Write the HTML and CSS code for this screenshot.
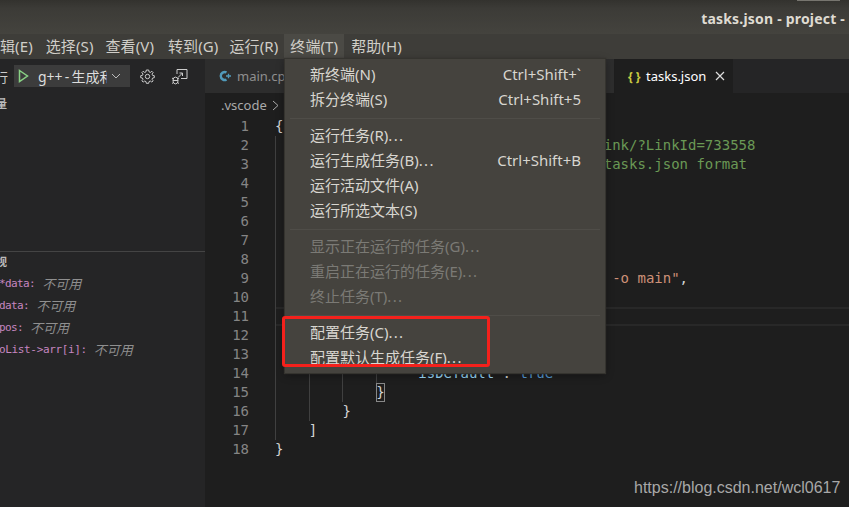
FILE: index.html
```html
<!DOCTYPE html>
<html lang="zh">
<head>
<meta charset="utf-8">
<title>tasks.json - project</title>
<link rel="stylesheet" href="styles.css">
</head>
<body>
<div class="window">
  <header class="titlebar"><span class="title">tasks.json - project -</span></header>
  <nav class="menubar">
    <span class="mi first">辑(E)</span>
    <span class="mi">选择(S)</span>
    <span class="mi">查看(V)</span>
    <span class="mi">转到(G)</span>
    <span class="mi">运行(R)</span>
    <span class="mi active">终端(T)</span>
    <span class="mi">帮助(H)</span>
  </nav>
  <div class="workbench">
    <aside class="sidebar">
      <div class="runbar">
        <span class="runlabel">行</span>
        <div class="runbox">
          <svg class="play" width="12" height="14" viewBox="0 0 12 14"><path d="M1.5 1.5 L9.5 7 L1.5 12.5 Z" fill="none" stroke="#89d185" stroke-width="1.5"/></svg>
          <span class="runname">g++ - 生成和</span>
          <svg class="chev" width="10" height="6" viewBox="0 0 10 6"><path d="M1 1 L5 5 L9 1" fill="none" stroke="#bbb" stroke-width="1"/></svg>
        </div>
        <svg class="gear" width="15" height="15" viewBox="0 0 15 15"><circle cx="7.5" cy="7.5" r="2.2" fill="none" stroke="#ccc"/><path d="M6.3 1 H8.7 L9 2.8 L10.4 3.4 L11.9 2.3 L13.1 3.5 L12 5.1 L12.6 6.4 L14.3 6.7 V8.7 L12.6 9 L12 10.3 L13.1 11.8 L11.8 13.1 L10.3 12 L9 12.6 L8.7 14.3 H6.3 L6 12.6 L4.7 12 L3.2 13.1 L1.9 11.8 L3 10.3 L2.4 9 L0.7 8.7 V6.7 L2.4 6.4 L3 5.1 L1.9 3.5 L3.1 2.3 L4.6 3.4 L6 2.8 Z" fill="none" stroke="#ccc"/></svg>
        <svg class="dbg" width="17" height="17" viewBox="0 0 17 17"><path d="M6 6 V1.5 H16 V10.5 H10 M7 9.5 L11.5 5 M8.5 5 H11.5 V8" fill="none" stroke="#ccc"/><ellipse cx="4.5" cy="12.5" rx="2.6" ry="3.4" fill="none" stroke="#ccc"/><path d="M1 10 L2.5 11 M8 10 L6.5 11 M1 15.5 L2.5 14.5 M8 15.5 L6.5 14.5 M2 12.5 H7" fill="none" stroke="#ccc"/></svg>
      </div>
      <div class="sec-head">量</div>
      <div class="watch">
        <div class="sec-head watch-head">视</div>
        <div class="w"><span class="wn">*data:</span><i>不可用</i></div>
        <div class="w"><span class="wn">data:</span><i>不可用</i></div>
        <div class="w"><span class="wn">pos:</span><i>不可用</i></div>
        <div class="w"><span class="wn long">oList-&gt;arr[i]:</span><i>不可用</i></div>
      </div>
    </aside>
    <main class="editor">
      <div class="tabs">
        <div class="tab inactive">
          <svg width="13" height="12" viewBox="0 0 13 12"><path d="M7.5 2.4 A4 4 0 1 0 7.5 9.6" fill="none" stroke="#519aba" stroke-width="2.4"/><path d="M7 6 H12 M9.5 3.8 V8.2" fill="none" stroke="#519aba" stroke-width="1.3"/></svg>
          <span>main.cpp</span>
        </div>
        <div class="tab current">
          <span class="jsonic">{ }</span>
          <span>tasks.json</span>
          <svg class="close" width="10" height="10" viewBox="0 0 10 10"><path d="M1 1 L9 9 M9 1 L1 9" stroke="#ddd" stroke-width="1.2"/></svg>
        </div>
      </div>
      <div class="crumbs"><span>.vscode</span><svg width="7" height="11" viewBox="0 0 7 11"><path d="M1 1 L6 5.5 L1 10" fill="none" stroke="#aaa"/></svg></div>
      <div class="code">
        <div class="ln"><b>1</b><code><span class="p">{</span></code></div>
        <div class="ln"><b>2</b><code><s></s><span class="c">// See https://go.microsoft.com/fwlink/?LinkId=733558</span></code></div>
        <div class="ln"><b>3</b><code><s></s><span class="c">// for the documentation about the tasks.json format</span></code></div>
        <div class="ln"><b>4</b><code><s></s><span class="k">"version"</span><span class="p">: </span><span class="v">"2.0.0"</span><span class="p">,</span></code></div>
        <div class="ln"><b>5</b><code><s></s><span class="k">"tasks"</span><span class="p">: [</span></code></div>
        <div class="ln"><b>6</b><code><s></s><s></s><span class="p">{</span></code></div>
        <div class="ln"><b>7</b><code><s></s><s></s><s></s><span class="k">"type"</span><span class="p">: </span><span class="v">"shell"</span><span class="p">,</span></code></div>
        <div class="ln"><b>8</b><code><s></s><s></s><s></s><span class="k">"label"</span><span class="p">: </span><span class="v">"build"</span><span class="p">,</span></code></div>
        <div class="ln"><b>9</b><code><s></s><s></s><s></s><span class="k">"command"</span><span class="p">: </span><span class="v">"g++ -g main.cpp -o main"</span><span class="p">,</span></code></div>
        <div class="ln"><b>10</b><code><s></s><s></s><s></s><span class="k">"problemMatcher"</span><span class="p">: [],</span></code></div>
        <div class="ln cur"><b>11</b><code><s></s><s></s><s></s></code></div>
        <div class="ln"><b>12</b><code><s></s><s></s><s></s><span class="k">"group"</span><span class="p">: {</span></code></div>
        <div class="ln"><b>13</b><code><s></s><s></s><s></s><s></s><span class="k">"kind"</span><span class="p">: </span><span class="v">"build"</span><span class="p">,</span></code></div>
        <div class="ln"><b>14</b><code><s></s><s></s><s></s><s></s><span class="k">"isDefault"</span><span class="p">: </span><span class="t">true</span></code></div>
        <div class="ln"><b>15</b><code><s></s><s></s><s></s><span class="p match">}</span></code></div>
        <div class="ln"><b>16</b><code><s></s><s></s><span class="p">}</span></code></div>
        <div class="ln"><b>17</b><code><s></s><span class="p">]</span></code></div>
        <div class="ln"><b>18</b><code><span class="p">}</span></code></div>
      </div>
    </main>
  </div>

  <div class="menu">
    <div class="row"><span>新终端(N)</span><kbd>Ctrl+Shift+`</kbd></div>
    <div class="row"><span>拆分终端(S)</span><kbd>Ctrl+Shift+5</kbd></div>
    <hr>
    <div class="row"><span>运行任务(R)<span class="dots">...</span></span></div>
    <div class="row"><span>运行生成任务(B)<span class="dots">...</span></span><kbd>Ctrl+Shift+B</kbd></div>
    <div class="row"><span>运行活动文件(A)</span></div>
    <div class="row"><span>运行所选文本(S)</span></div>
    <hr>
    <div class="row off"><span>显示正在运行的任务(G)<span class="dots">...</span></span></div>
    <div class="row off"><span>重启正在运行的任务(E)<span class="dots">...</span></span></div>
    <div class="row off"><span>终止任务(T)<span class="dots">...</span></span></div>
    <hr>
    <div class="row"><span>配置任务(C)<span class="dots">...</span></span></div>
    <div class="row"><span>配置默认生成任务(F)<span class="dots">...</span></span></div>
  </div>
  <div class="redbox"></div>
  <div class="mark">https://blog.csdn.net/wcl0617</div>
</div>
</body>
</html>
```

FILE: styles.css
```css
* { box-sizing: border-box; }
html, body { margin: 0; height: 100%; background: #1e1e1e; overflow: hidden; }
.window {
  position: relative; width: 849px; height: 507px; overflow: hidden;
  display: flex; flex-direction: column;
  font-family: "Noto Sans", "Noto Sans CJK SC", sans-serif;
  color: #ccc;
}
.titlebar {
  position: relative; height: 34px; flex: none;
  background: linear-gradient(#33322e, #3c3b37 25%, #44433e);
  display: flex; justify-content: flex-end; align-items: center; padding: 3px 4px 0 0;
}
.titlebar::before {
  content: ""; position: absolute; top: 0; right: 9px; width: 43px; height: 1px; background: #77756f;
}
.title { font: bold 14px "Noto Sans", sans-serif; color: #dfdbd2; letter-spacing: .2px; }
.menubar {
  height: 25px; flex: none; background: #3e3d39;
  display: flex; align-items: flex-start; font-size: 15px; color: #d0cec8; letter-spacing: .1px;
}
.mi { height: 24px; line-height: 24px; padding: 0 6px; }
.mi.first { margin-left: -6px; }
.mi:nth-child(2) { margin-left: 1px; }
.mi:nth-child(4) { margin-left: 2px; }
.mi:nth-child(5) { margin-left: -1px; }
.mi:nth-child(7) { margin-left: 1px; }
.mi.active { background: #4b4a45; }
.workbench { flex: 1; display: flex; min-height: 0; }
.sidebar { width: 205px; flex: none; background: #252526; display: flex; flex-direction: column; }
.runbar { height: 34px; display: flex; align-items: center; font-size: 13px; }
.runlabel { width: 14px; margin-left: -5px; font-size: 13px; flex: none; margin-right: 5px; }
.runbox {
  width: 116px; height: 22px; background: #3c3c3c; flex: none;
  display: flex; align-items: center; padding-left: 4px; overflow: hidden;
}
.play { flex: none; margin-right: 8px; }
.runname { width: 69px; overflow: hidden; white-space: nowrap; font-size: 14px; color: #ddd; flex: none; word-spacing: -1.5px; }
.chev { flex: none; margin-left: 4px; }
.gear { margin-left: 10px; flex: none; }
.dbg { margin-left: 16px; flex: none; }
.sec-head { font-size: 11px; font-weight: 700; line-height: 22px; height: 22px; margin-left: -4px; color: #bbb; }
.watch { margin-top: 136px; border-top: 1px solid #444; }
.watch-head { height: 21px; line-height: 19px; }
.w { height: 22px; display: flex; gap: 7px; align-items: center; padding-bottom: 1px; white-space: nowrap; margin-left: -1px; }
.wn { color: #c586c0; font: 11px "DejaVu Sans Mono", monospace; letter-spacing: -.6px; }
.wn.long { letter-spacing: -.35px; }
.w i { color: #8f8f8f; font: italic 13px "Noto Sans CJK SC", sans-serif; }
.editor { flex: 1; min-width: 0; background: #1e1e1e; display: flex; flex-direction: column; }
.tabs { height: 34px; flex: none; background: #252526; display: flex; font-size: 13px; }
.tab { display: flex; align-items: center; height: 34px; }
.tab.inactive { width: 409px; background: #2d2d2d; padding-left: 14px; gap: 5px; color: #8f8f8f; }
.tab.current { width: 119px; background: #1e1e1e; padding-left: 14px; color: #fff; }
.jsonic { color: #cbcb41; font-size: 12px; font-weight: 700; width: 18px; white-space: nowrap; }
.close { margin-left: 9px; }
.crumbs { height: 24px; flex: none; display: flex; align-items: center; gap: 5px; padding-left: 16px; font-size: 13px; color: #aaa; }
.code { font: 14px/19px "DejaVu Sans Mono", monospace; }
.ln { display: flex; height: 19px; white-space: pre; }
.ln b { width: 44px; text-align: right; font-weight: 400; color: #858585; flex: none; margin-right: 26px; }
.ln code { font: inherit; flex: 1; display: flex; }
.ln s { width: 33.72px; height: 19px; flex: none; border-left: 1px solid #404040; text-decoration: none; }
.cur code { box-shadow: inset 0 2px #282828, inset 0 -2px #282828; }
.p { color: #d4d4d4; }
.k { color: #9cdcfe; }
.v { color: #ce9178; }
.c { color: #6a9955; }
.t { color: #569cd6; }
.match { outline: 1px solid #888; outline-offset: -1px; }
.menu {
  position: absolute; left: 285px; top: 59px; width: 320px; height: 314px;
  background: #45433e; box-shadow: 0 0 1px 1px #35342f, 0 2px 8px rgba(0,0,0,.4);
  padding-top: 4px; font-size: 15px; color: #d8d6d0;
}
.row { height: 25px; display: flex; justify-content: space-between; align-items: center; padding: 0 24px 4px 25px; white-space: nowrap; }
.row kbd { font: 15px "Noto Sans", sans-serif; }
.dots { letter-spacing: 1.3px; }
.row.off { color: #7b7a75; }
.menu hr { height: 1px; margin: 5px; border: 0; background: #4f4d48; }
.redbox {
  position: absolute; left: 282px; top: 316px; width: 208px; height: 51px;
  border: 3px solid #f4211c; border-radius: 3px;
}
.mark { position: absolute; left: 634px; top: 479px; font: 16px "Liberation Sans", sans-serif; color: #a8a8a8; }
```
